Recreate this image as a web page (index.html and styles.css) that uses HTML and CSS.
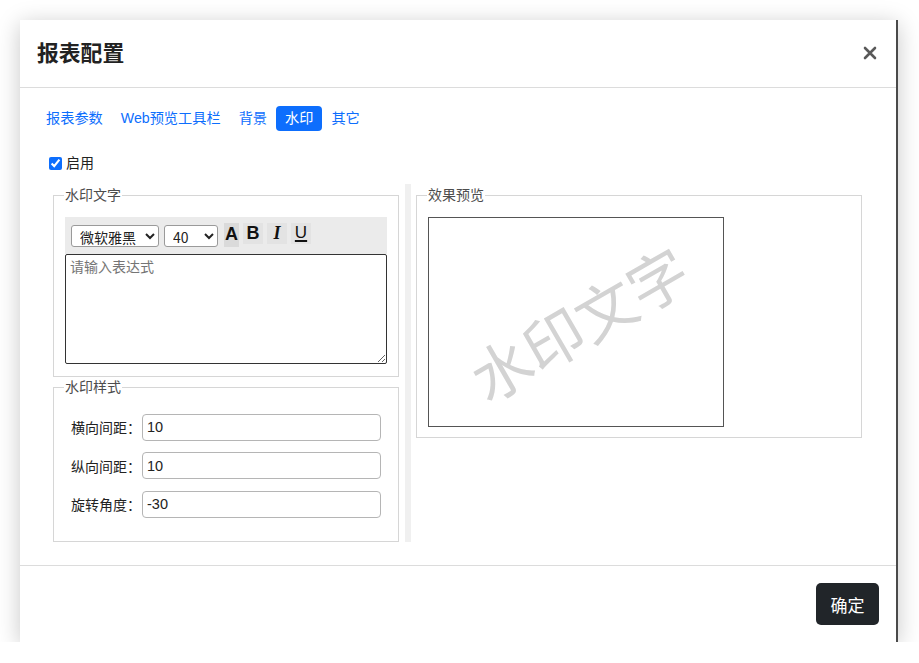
FILE: index.html
```html
<!DOCTYPE html>
<html lang="zh-CN">

<head>
    <meta charset="UTF-8">
    <meta name="viewport" content="width=device-width, initial-scale=1.0">
    <title>报表配置</title>
    <link rel="stylesheet" href="styles.css">
</head>

<body>
    <div class="dialog">
        <div class="dialog-header">
            <h5 class="dialog-title">报表配置</h5>
            <button class="btn-close" type="button" aria-label="Close">
                <svg width="14" height="14" viewBox="0 0 14 14">
                    <path d="M2 2 L12 12 M12 2 L2 12" stroke="#595959" stroke-width="2.6" stroke-linecap="round" />
                </svg>
            </button>
        </div>

        <div class="dialog-body">
            <ul class="tabs">
                <li><a href="#">报表参数</a></li>
                <li><a href="#">Web预览工具栏</a></li>
                <li><a href="#">背景</a></li>
                <li><a href="#" class="active">水印</a></li>
                <li><a href="#">其它</a></li>
            </ul>

            <label class="enable-row">
                <input type="checkbox" checked>
                <span>启用</span>
            </label>

            <div class="panes">
                <div class="left-col">
                    <fieldset class="group text-group">
                        <legend>水印文字</legend>
                        <div class="toolbar">
                            <select class="font-select">
                                <option>微软雅黑</option>
                            </select>
                            <select class="size-select">
                                <option>40</option>
                            </select>
                            <span class="tool tool-a">A</span>
                            <span class="tool tool-b">B</span>
                            <span class="tool tool-i">I</span>
                            <span class="tool tool-u">U</span>
                        </div>
                        <textarea placeholder="请输入表达式"></textarea>
                    </fieldset>

                    <fieldset class="group style-group">
                        <legend>水印样式</legend>
                        <div class="form-row">
                            <label>横向间距：</label>
                            <input type="text" value="10">
                        </div>
                        <div class="form-row">
                            <label>纵向间距：</label>
                            <input type="text" value="10">
                        </div>
                        <div class="form-row">
                            <label>旋转角度：</label>
                            <input type="text" value="-30">
                        </div>
                    </fieldset>
                </div>

                <div class="divider"></div>

                <fieldset class="group preview-group">
                    <legend>效果预览</legend>
                    <div class="preview">
                        <span class="watermark">水印文字</span>
                    </div>
                </fieldset>
            </div>
        </div>

        <div class="dialog-footer">
            <button class="btn-ok" type="button">确定</button>
        </div>
    </div>
</body>

</html>
```

FILE: styles.css
```css
body {
    margin: 0;
    background-color: #ffffff;
    font-family: "Liberation Sans", "Noto Sans CJK SC", sans-serif;
    color: #212529;
}

.dialog {
    margin: 20px 0 0 20px;
    width: 876px;
    height: 622px;
    border-right: 2px solid #4a4a4a;
    background-color: #ffffff;
    box-shadow: 0 4px 22px rgba(0, 0, 0, 0.22);
    display: flex;
    flex-direction: column;
}

.dialog-header {
    height: 68px;
    box-sizing: border-box;
    padding: 0 19px 4px 17px;
    border-bottom: 1px solid #dcdcdc;
    display: flex;
    align-items: center;
    justify-content: space-between;
}

.dialog-title {
    margin: 0;
    font-size: 21.8px;
    font-weight: 700;
    color: #222222;
}

.btn-close {
    border: none;
    background: none;
    padding: 0;
    width: 14px;
    height: 14px;
    margin-top: 2px;
    cursor: pointer;
}

.btn-close svg {
    display: block;
}

.dialog-body {
    flex: 1;
    padding: 18px 17px 0 17px;
}

.tabs {
    list-style: none;
    margin: 0;
    padding: 0;
    display: flex;
}

.tabs a {
    display: block;
    padding: 4px 9px;
    line-height: 17px;
    font-size: 14.2px;
    color: #0d6efd;
    text-decoration: none;
    border-radius: 4px;
}

.tabs a.active {
    background-color: #0d6efd;
    color: #ffffff;
}

.enable-row {
    display: flex;
    align-items: center;
    margin: 22px 0 0 12px;
    font-size: 14px;
    line-height: 20px;
    color: #222222;
}

.enable-row input {
    margin: 1px 4px 0 0;
    width: 13px;
    height: 13px;
    accent-color: #0d6efd;
}

.panes {
    display: flex;
    margin: 11px 0 0 16px;
}

.left-col {
    width: 346px;
    padding-top: 2.5px;
}

.divider {
    width: 6px;
    margin: 0 5px 0 6px;
    background-color: #f0f0f0;
}

.group {
    margin: 0;
    border: 1px solid #d6d6d6;
    min-width: 0;
}

.group legend {
    padding: 0 1px;
    margin-left: -1px;
    font-size: 14px;
    line-height: 17px;
    color: #4d4d4d;
}

.text-group {
    padding: 13px 11px 12px 11px;
}

.toolbar {
    height: 37px;
    box-sizing: border-box;
    padding: 6px 6px 0 6px;
    background-color: #ebebeb;
    display: flex;
    align-items: flex-start;
}

.toolbar select {
    height: 22px;
    margin-top: 2px;
    font-family: "Noto Sans CJK SC", sans-serif;
    font-size: 14px;
    color: #222222;
    border: 1px solid #9a9a9a;
    border-radius: 3px;
    background-color: #ffffff;
    padding: 0 2px 0 4px;
}

.font-select {
    width: 88px;
}

.size-select {
    width: 54px;
    margin-left: 5px;
}

.tool {
    display: flex;
    align-items: center;
    justify-content: center;
    width: 20px;
    height: 21px;
    margin-left: 4px;
    background-color: #e3e3e3;
    color: #111111;
    font-size: 18px;
    font-weight: 700;
}

.tool-a {
    width: 15px;
    height: 24px;
    margin-left: 6px;
    background-color: #dadada;
}

.tool-i {
    font-family: "Liberation Serif", serif;
    font-style: italic;
}

.tool-u {
    font-weight: 400;
    font-size: 17px;
    text-decoration: underline;
    text-decoration-thickness: 2px;
    text-underline-offset: 2px;
}

textarea {
    display: block;
    width: 322px;
    height: 110px;
    box-sizing: border-box;
    margin: 0;
    padding: 3px 4px;
    border: 1px solid #333333;
    border-radius: 2px;
    font-family: "Noto Sans CJK SC", sans-serif;
    font-size: 14px;
    line-height: 17px;
}

textarea::placeholder {
    color: #757575;
}

.style-group {
    margin-top: 2px;
    padding: 18px 17px 23px 17px;
}

.style-group legend {
    margin-left: -7px;
}

.form-row {
    display: flex;
    align-items: center;
    margin-bottom: 11.5px;
}

.form-row:last-child {
    margin-bottom: 0;
}

.form-row label {
    width: 71px;
    font-size: 14px;
    color: #222222;
}

.form-row input {
    width: 239px;
    height: 27px;
    box-sizing: border-box;
    padding: 0 4px;
    border: 1px solid #b5b5b5;
    border-radius: 4px;
    font-family: "Liberation Sans", sans-serif;
    font-size: 14.5px;
    color: #222222;
}

.preview-group {
    width: 446px;
    box-sizing: border-box;
    margin-top: 2.5px;
    align-self: flex-start;
    padding: 13px 11px 10px 11px;
}

.preview {
    width: 296px;
    height: 210px;
    box-sizing: border-box;
    border: 1px solid #555555;
    display: flex;
    align-items: center;
    justify-content: center;
    overflow: hidden;
}

.watermark {
    transform: rotate(-30deg);
    margin: 0 0 0 4px;
    font-family: "Noto Sans CJK SC", sans-serif;
    font-size: 60px;
    font-weight: 400;
    color: #d3d3d3;
    white-space: nowrap;
}

.dialog-footer {
    height: 76px;
    border-top: 1px solid #dcdcdc;
    padding: 0 17px;
    display: flex;
    align-items: center;
    justify-content: flex-end;
}

.btn-ok {
    width: 63px;
    height: 42px;
    border: none;
    border-radius: 5px;
    background-color: #212529;
    color: #ffffff;
    font-family: "Noto Sans CJK SC", sans-serif;
    font-size: 17px;
    cursor: pointer;
}
```
